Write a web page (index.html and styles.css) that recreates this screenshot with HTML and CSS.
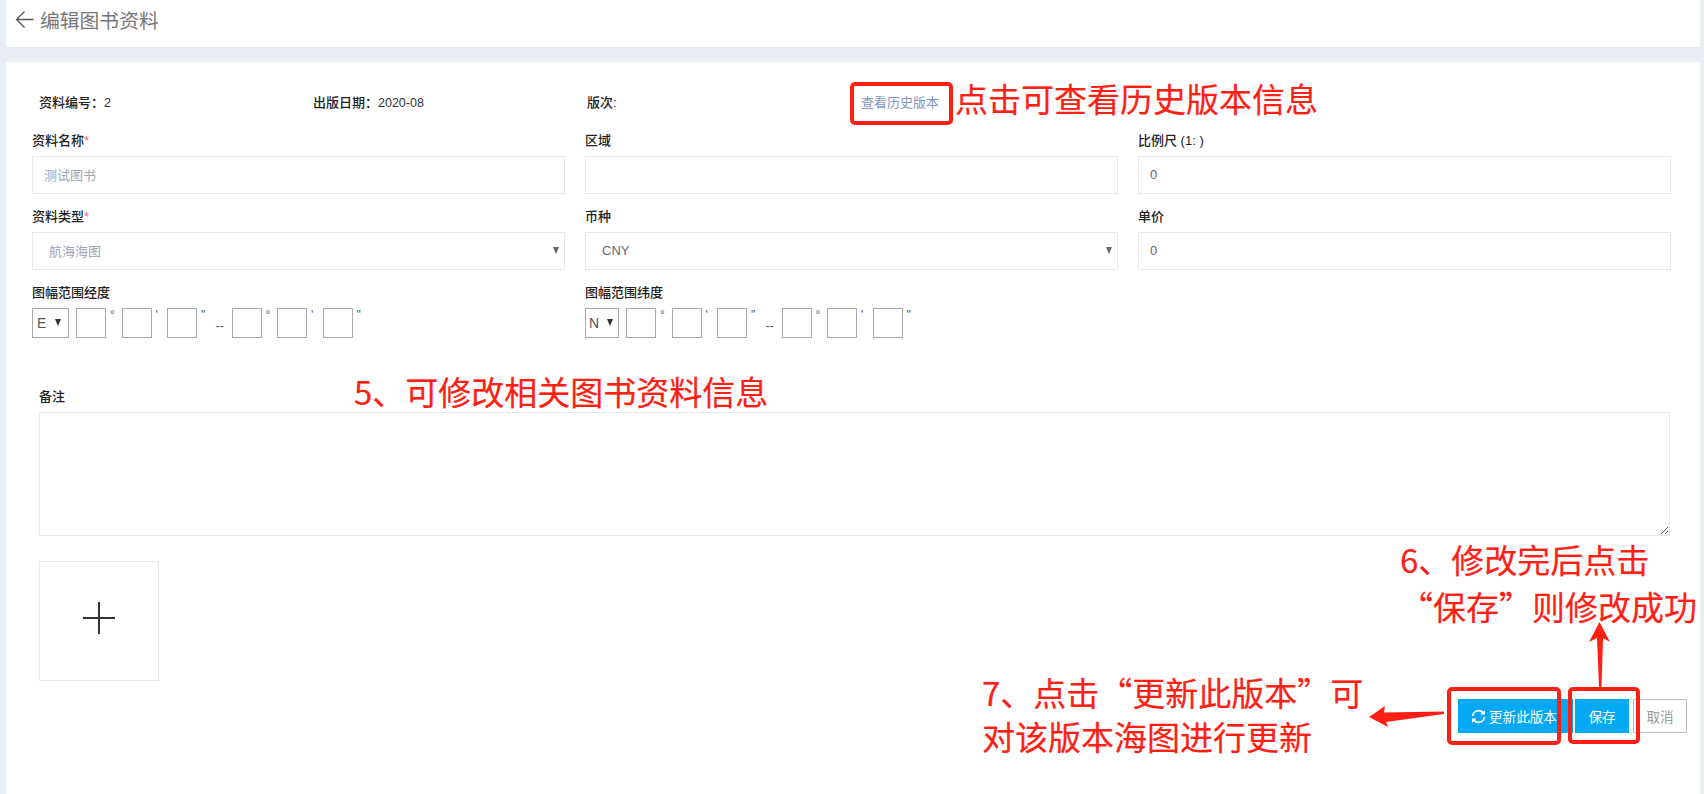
FILE: index.html
```html
<!DOCTYPE html>
<html lang="zh-CN">
<head>
<meta charset="utf-8">
<title>编辑图书资料</title>
<link rel="stylesheet" href="styles.css">
</head>
<body>
<div class="page">
  <header class="topbar">
    <svg class="back" width="19" height="19" viewBox="0 0 19 19"><path d="M9.5 1.5 1.5 9.5l8 8M1.5 9.5H18.5" fill="none" stroke="#555" stroke-width="1.3"/></svg>
    <h1 class="title">编辑图书资料</h1>
  </header>
  <main class="panel">
    <div class="info">
      <div><b>资料编号&#xFF1A;</b><span class="val">2</span></div>
      <div><b>出版日期&#xFF1A;</b><span class="val">2020-08</span></div>
      <div><b>版次:</b></div>
      <div><a class="history">查看历史版本</a></div>
    </div>
    <div class="form">
      <div class="field">
        <label>资料名称<em>*</em></label>
        <input class="box muted" type="text" value="测试图书">
      </div>
      <div class="field">
        <label>区域</label>
        <input class="box" type="text">
      </div>
      <div class="field">
        <label>比例尺 (1: )</label>
        <input class="box" type="text" value="0">
      </div>
      <div class="field">
        <label>资料类型<em>*</em></label>
        <div class="box select muted"><span>航海海图</span><i class="caret"></i></div>
      </div>
      <div class="field">
        <label>币种</label>
        <div class="box select"><span>CNY</span><i class="caret"></i></div>
      </div>
      <div class="field">
        <label>单价</label>
        <input class="box" type="text" value="0">
      </div>
      <div class="field">
        <label>图幅范围经度</label>
        <div class="coord">
          <div class="dir dir-e"><span>E</span><i class="caret dark"></i></div>
          <input type="text"><span class="mark">°</span>
          <input type="text"><span class="mark">'</span>
          <input type="text"><span class="mark">"</span>
          <span class="dash">--</span>
          <input type="text"><span class="mark">°</span>
          <input type="text"><span class="mark">'</span>
          <input type="text"><span class="mark">"</span>
        </div>
      </div>
      <div class="field">
        <label>图幅范围纬度</label>
        <div class="coord">
          <div class="dir dir-n"><span>N</span><i class="caret dark"></i></div>
          <input type="text"><span class="mark">°</span>
          <input type="text"><span class="mark">'</span>
          <input type="text"><span class="mark">"</span>
          <span class="dash">--</span>
          <input type="text"><span class="mark">°</span>
          <input type="text"><span class="mark">'</span>
          <input type="text"><span class="mark">"</span>
        </div>
      </div>
    </div>
    <div class="remark">
      <label>备注</label>
      <textarea></textarea>
    </div>
    <div class="upload"><span class="plus"></span></div>
    <div class="actions">
      <button class="btn primary update" type="button">
        <svg width="15" height="15" viewBox="0 0 15 15"><g fill="none" stroke="#fff" stroke-width="1.7"><path d="M1.6 7A6 6 0 0 1 12 3.6"/><path d="M13.4 8A6 6 0 0 1 3 11.4"/></g><path d="M14 1v4.6H9.4zM1 14V9.4h4.6z" fill="#fff"/></svg>
        更新此版本
      </button>
      <button class="btn primary save" type="button">保存</button>
      <button class="btn cancel" type="button">取消</button>
    </div>
  </main>
</div>

<div class="note n-history">点击可查看历史版本信息</div>
<div class="note n-edit">5、可修改相关图书资料信息</div>
<div class="note n-save">6、修改完后点击<br>“保存”则修改成功</div>
<div class="note n-update">7、点击“更新此版本”可<br>对该版本海图进行更新</div>
<span class="ring r-history"></span>
<span class="ring r-update"></span>
<span class="ring r-save"></span>
<svg class="arrows" width="1704" height="794" viewBox="0 0 1704 794">
  <path d="M1599.5 622 1610 642 1603 638 1601.5 687H1599L1597 638 1589 642Z" fill="#ff2015"/>
  <path d="M1369 717 1385 706 1384 712.5 1444 711.5V714L1386 722 1388 727Z" fill="#ff2015"/>
</svg>
</body>
</html>
```
FILE: styles.css
```css
* { box-sizing: border-box; }
html, body { margin: 0; height: 794px; overflow: hidden; }
body {
  background: #e9edf4;
  font-family: "Liberation Sans", "Noto Sans CJK SC", sans-serif;
  font-size: 13px;
  color: #333;
  position: relative;
}
.page {
  height: 794px;
  padding: 0 4px 0 6px;
  display: flex;
  flex-direction: column;
}
.topbar {
  height: 47px;
  background: #fff;
  display: flex;
  align-items: flex-start;
  padding: 10px 0 0 9px;
  flex: none;
}
.back { margin: 0 6px 0 0; flex: none; }
.title {
  margin: 0;
  font-size: 19.8px;
  line-height: 22px;
  font-weight: normal;
  color: #777;
}
.panel {
  flex: 1;
  margin-top: 15px;
  background: #fff;
  padding: 31px 29px 0 26px;
}
.info {
  display: grid;
  grid-template-columns: repeat(4, 274px);
  height: 20px;
  line-height: 20px;
  margin: 0 0 18px 7px;
  color: #333;
}
.info b { font-weight: 500; color: #222; }
.val { font-size: 12.5px; }
.history { color: #7f96c2; }
.form {
  display: grid;
  grid-template-columns: repeat(3, 1fr);
  column-gap: 20px;
  row-gap: 13px;
}
.field { min-width: 0; }
label {
  display: block;
  height: 20px;
  line-height: 20px;
  margin-bottom: 5px;
  font-weight: 500;
  color: #222;
}
label em { color: #ef6a6a; font-style: normal; font-weight: normal; }
.box {
  display: block;
  width: 100%;
  height: 38px;
  border: 1px solid #e6e8ea;
  padding: 0 12px 1px 11px;
  font: inherit;
  color: #666;
  background: #fff;
  border-radius: 0;
  outline: 0;
}
.box.muted { color: #a0a6b5; }
.select {
  display: flex;
  align-items: center;
  justify-content: space-between;
  padding: 0 5px 1px 16px;
}
.caret {
  width: 0;
  height: 0;
  border-left: 3.5px solid transparent;
  border-right: 3.5px solid transparent;
  border-top: 7px solid #666;
}
.caret.dark { border-top-color: #333; }
.coord {
  display: flex;
  align-items: flex-start;
  height: 29px;
}
.coord input {
  width: 30px;
  height: 29.5px;
  border: 1px solid #a9a9a9;
  padding: 0;
  background: #fff;
  flex: none;
  outline: 0;
  border-radius: 0;
}
.dir {
  height: 29.5px;
  border: 1px solid #a9a9a9;
  display: flex;
  align-items: center;
  justify-content: space-between;
  padding: 0 7px 0 4px;
  font-size: 14px;
  color: #555;
  margin-right: 7px;
  flex: none;
}
.dir-e { width: 37px; }
.dir-n { width: 34px; padding-right: 5px; padding-left: 3px; margin-right: 7px; }
.mark {
  width: 15.5px;
  padding-left: 4px;
  line-height: 14px;
  font-size: 12px;
  color: #555;
  flex: none;
}
.dash {
  width: 19px;
  padding: 11px 0 0 3px;
  line-height: 14px;
  color: #555;
  flex: none;
}
.remark { margin: 50px 1px 0 7px; }
.remark textarea {
  display: block;
  width: 100%;
  height: 124px;
  border: 1px solid #e6e8ea;
  outline: 0;
  background: #fff;
  border-radius: 0;
}
.upload {
  width: 120px;
  height: 120px;
  margin: 25px 0 0 7px;
  border: 1px solid #e6e8ea;
  display: flex;
  align-items: center;
  justify-content: center;
}
.plus {
  width: 32px;
  height: 32px;
  margin-bottom: 6px;
  background:
    linear-gradient(#333, #333) center / 32px 2px no-repeat,
    linear-gradient(#333, #333) center / 2px 32px no-repeat;
}
.actions {
  display: flex;
  justify-content: flex-end;
  margin: 18px -16px 0 0;
}
.btn {
  height: 34px;
  border: 0;
  padding: 0;
  font-family: inherit;
  font-size: 13.6px;
  display: flex;
  align-items: center;
  justify-content: center;
  flex: none;
}
.primary { background: #03a9f4; color: #fff; }
.update { width: 115px; gap: 3px; margin-right: 2px; justify-content: flex-start; padding-left: 13px; }
.save { width: 54px; margin-right: 4px; }
.cancel { width: 54px; background: #fff; color: #999; border: 1px solid #bbb; }

.note {
  position: absolute;
  font-family: "Noto Sans CJK SC", sans-serif;
  font-size: 33px;
  color: #ff2015;
  white-space: nowrap;
  -webkit-text-stroke: 0.2px #ff2015;
}
.n-history { left: 955px; top: 73px; line-height: 50px; }
.n-edit { left: 354px; top: 366px; line-height: 50px; }
.n-save { left: 1400px; top: 536px; line-height: 47px; }
.n-update { left: 982px; top: 670px; line-height: 44px; }
.ring {
  position: absolute;
  border: 4px solid #ff2015;
  border-radius: 5px;
}
.r-history { left: 850px; top: 82px; width: 103px; height: 43px; }
.r-update { left: 1447px; top: 687px; width: 114px; height: 58px; }
.r-save { left: 1568px; top: 687px; width: 72px; height: 57px; }
.arrows { position: absolute; left: 0; top: 0; pointer-events: none; }
```
